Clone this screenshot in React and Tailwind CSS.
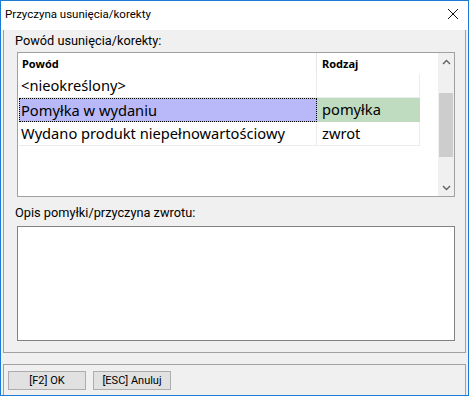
import React from 'react';

const rows = [
  { reason: '<nieokreślony>', kind: '' },
  { reason: 'Pomyłka w wydaniu', kind: 'pomyłka', selected: true },
  { reason: 'Wydano produkt niepełnowartościowy', kind: 'zwrot' },
];

const small = { fontFamily: 'Roboto, "Noto Sans", sans-serif' };

const Chevron = ({ down }) => (
  <svg width="9" height="6" viewBox="0 0 9 6">
    <polyline
      points={down ? '1,1 4.5,4.5 8,1' : '1,5 4.5,1.5 8,5'}
      fill="none"
      stroke="#606060"
      strokeWidth="1.4"
    />
  </svg>
);

const App = () => {
  return (
    <div
      className="w-[469px] h-[396px] border border-[#1c7bd5] bg-[#f0f0f0] flex flex-col text-black overflow-hidden"
      style={{ fontFamily: '"Noto Sans", "Open Sans", sans-serif' }}
    >
      {/* title bar */}
      <div className="h-[29px] bg-white flex items-start justify-between pl-[4px] pr-[9px] shrink-0">
        <span className="text-[11.5px] leading-[16px] pt-[5px]" style={small}>
          Przyczyna usunięcia/korekty
        </span>
        <svg width="12" height="12" viewBox="0 0 12 12" className="mt-[7px]">
          <path d="M1 1 L11 11 M11 1 L1 11" stroke="#111" strokeWidth="1" />
        </svg>
      </div>

      {/* main panel */}
      <div className="mx-[2px] h-[323px] border-x border-b border-[#a0a0a0] pl-[11px] pr-[10px] pt-[3px] flex flex-col shrink-0">
        <div className="text-[12.75px] leading-[16px]" style={small}>
          Powód usunięcia/korekty:
        </div>

        <div className="mt-[3px] ml-[2px] h-[145px] border border-[#a0a0a0] bg-white flex">
          <div className="flex-1 pl-px flex flex-col">
            <div className="h-[21px] flex text-[11px] font-bold leading-[21px]">
              <div className="w-[298px] pl-[3px] border-r border-[#e6e6e6]">Powód</div>
              <div className="w-[102px] pl-[5px]">Rodzaj</div>
            </div>
            {rows.map((r) => (
              <div key={r.reason} className="h-[24px] flex text-[14.67px] leading-[23px]">
                <div
                  className={
                    r.selected
                      ? 'w-[298px] pl-[1px] bg-[#b9b9f9] border border-dotted border-black'
                      : 'w-[298px] pl-[2px] border-b border-r border-[#ececec]'
                  }
                >
                  {r.reason}
                </div>
                <div
                  className={
                    r.selected
                      ? 'w-[103px] pl-[5px] bg-[#c0dcc0]'
                      : 'w-[103px] pl-[5px] border-b border-r border-[#ececec]'
                  }
                >
                  {r.kind}
                </div>
              </div>
            ))}
          </div>

          {/* scrollbar */}
          <div className="w-[16px] bg-[#f0f0f0] flex flex-col items-center">
            <div className="h-[17px] flex items-center justify-center pt-[1px]">
              <Chevron />
            </div>
            <div className="h-[23px]" />
            <div className="w-[14px] h-[64px] bg-[#cdcdcd]" />
            <div className="flex-1" />
            <div className="h-[17px] flex items-center justify-center">
              <Chevron down />
            </div>
          </div>
        </div>

        <div className="mt-[8px] text-[12.75px] leading-[16px]" style={small}>
          Opis pomyłki/przyczyna zwrotu:
        </div>
        <div className="mt-[5px] ml-[2px] h-[115px] border border-[#828282] bg-white" />
      </div>

      {/* button bar */}
      <div
        className="mt-[11px] mx-[2px] flex-1 border-t border-x border-[#a0a0a0] flex gap-[7px] pl-[4px] pt-[6px]"
        style={small}
      >
        <button className="w-[78px] h-[19px] bg-[#e1e1e1] border border-[#adadad] text-[11px] leading-[16px]">
          [F2] OK
        </button>
        <button className="w-[78px] h-[19px] bg-[#e1e1e1] border border-[#adadad] text-[11px] leading-[16px]">
          [ESC] Anuluj
        </button>
      </div>
    </div>
  );
};

export default App;
